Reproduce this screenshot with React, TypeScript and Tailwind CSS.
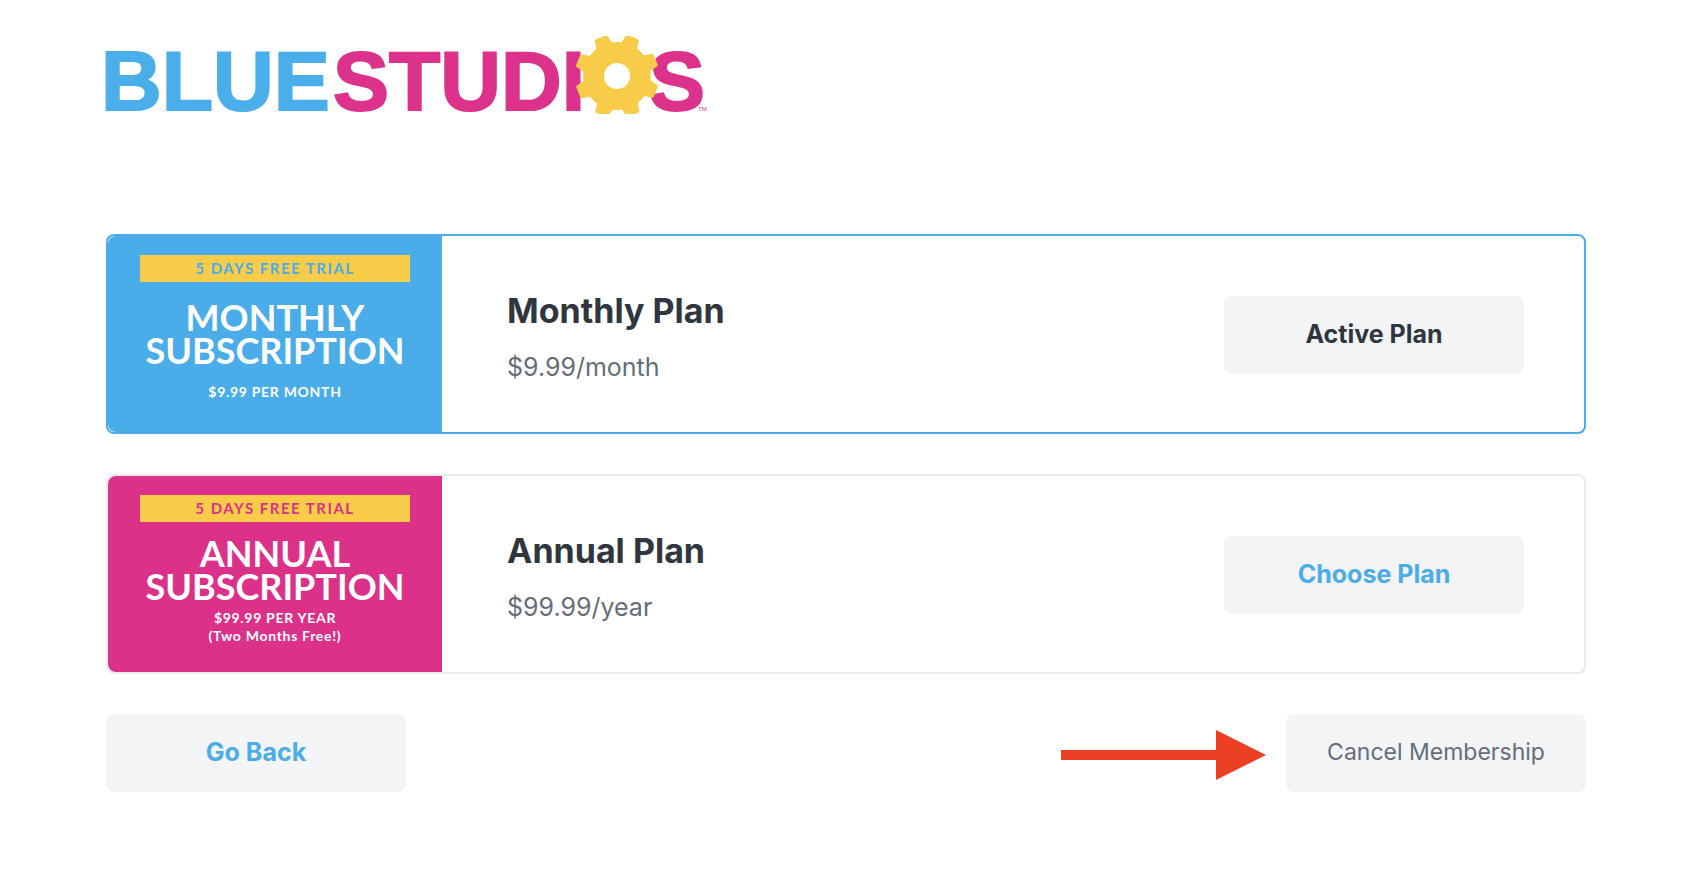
type Plan = {
  id: string;
  name: string;
  price: string;
  active: boolean;
  artTitle: string[];
  artLines: string[];
};

const plans: Plan[] = [
  {
    id: "monthly",
    name: "Monthly Plan",
    price: "$9.99/month",
    active: true,
    artTitle: ["MONTHLY", "SUBSCRIPTION"],
    artLines: ["$9.99 PER MONTH"],
  },
  {
    id: "annual",
    name: "Annual Plan",
    price: "$99.99/year",
    active: false,
    artTitle: ["ANNUAL", "SUBSCRIPTION"],
    artLines: ["$99.99 PER YEAR", "(Two Months Free!)"],
  },
];

const buttonBase =
  "flex h-[78px] w-[300px] shrink-0 items-center justify-center rounded-lg bg-[#f3f4f6]";

function Logo() {
  return (
    <svg
      viewBox="0 0 600 78"
      className="h-[78px] w-[600px] max-w-full overflow-visible"
      role="img"
      aria-label="Blue Studios"
    >
      <g
        fontFamily='"Liberation Sans", Arial, sans-serif'
        fontWeight="700"
        fontSize="84"
        strokeWidth="2"
      >
        <text x="-5" y="74" fill="#4aaeea" stroke="#4aaeea">
          BLUE
        </text>
        <text x="227" y="74" fill="#dd328b" stroke="#dd328b">
          STUDI
        </text>
        <text x="543" y="74" fill="#dd328b" stroke="#dd328b">
          S
        </text>
      </g>
      <text
        x="592"
        y="75"
        fontSize="6"
        fontFamily='"Liberation Sans", Arial, sans-serif'
        fill="#dd328b"
      >
        TM
      </text>
      {/* the gear is cut flat at the top and bottom of the logo */}
      <svg x="465" y="0" width="92" height="78" viewBox="-46 -40 92 78">
        <g fill="#f8cc48">
          {[0, 45, 90, 135, 180, 225, 270, 315].map((angle) => (
            <path
              key={angle}
              d="M-9 -30 L-7 -40 Q-7 -42 -5 -42 L5 -42 Q7 -42 7 -40 L9 -30 Z"
              transform={`rotate(${angle + 22})`}
            />
          ))}
          <circle r="34" />
          <circle r="13" fill="#fff" />
        </g>
      </svg>
    </svg>
  );
}

function PlanArt({ plan }: { plan: Plan }) {
  return (
    <div
      className={`flex w-[334px] shrink-0 flex-col items-center rounded-l-lg pt-[19px] font-[Lato,sans-serif] font-bold text-white ${
        plan.active ? "bg-[#4aace9]" : "bg-[#db3189]"
      }`}
    >
      <p
        className={`w-[270px] bg-[#f8cc48] text-center text-[15px] leading-[27px] tracking-widest ${
          plan.active ? "text-[#4aace9]" : "text-[#db3189]"
        }`}
      >
        5 DAYS FREE TRIAL
      </p>
      <div
        className={`text-center text-[36px] leading-[33px] ${
          plan.active ? "mt-[19px]" : "mt-[15px]"
        }`}
      >
        {plan.artTitle.map((line) => (
          <p key={line}>{line}</p>
        ))}
      </div>
      <div
        className={`text-center text-[14px] leading-[18px] tracking-wider ${
          plan.active ? "mt-4" : "mt-[6px]"
        }`}
      >
        {plan.artLines.map((line) => (
          <p key={line}>{line}</p>
        ))}
      </div>
    </div>
  );
}

function PlanCard({ plan }: { plan: Plan }) {
  return (
    <article
      className={`flex min-h-[200px] rounded-lg border-2 ${
        plan.active ? "border-[#4aace9]" : "border-[#ebebf0]"
      }`}
    >
      <PlanArt plan={plan} />
      <div className="flex grow items-start justify-between pr-[60px] pl-[65px]">
        <div className="pt-[53px]">
          <h2 className="text-[34px] leading-[44px] font-bold text-[#30363d]">
            {plan.name}
          </h2>
          <p className="mt-[18px] text-[25px] leading-[32px] text-[#656d78]">
            {plan.price}
          </p>
        </div>
        <button
          type="button"
          className={`${buttonBase} mt-[60px] text-[25px] font-bold ${
            plan.active ? "text-[#30363d]" : "text-[#4aace9]"
          }`}
        >
          {plan.active ? "Active Plan" : "Choose Plan"}
        </button>
      </div>
    </article>
  );
}

export default function App() {
  return (
    <main className="min-h-screen bg-white pt-9 pr-[100px] pb-[90px] pl-[106px] font-[Inter,sans-serif]">
      <header>
        <Logo />
      </header>

      <section className="mt-[120px] flex flex-col gap-10">
        {plans.map((plan) => (
          <PlanCard key={plan.id} plan={plan} />
        ))}
      </section>

      <footer className="mt-10 flex items-center justify-between">
        <button
          type="button"
          className={`${buttonBase} text-[25px] font-bold text-[#4aace9]`}
        >
          Go Back
        </button>
        <div className="flex items-center gap-5">
          <svg
            viewBox="0 0 205 54"
            className="h-[54px] w-[205px]"
            fill="#ec4024"
            aria-hidden="true"
          >
            <path d="M0 24H155V4L205 29L155 54V34H0Z" />
          </svg>
          <button
            type="button"
            className={`${buttonBase} pb-[2px] text-[23px] text-[#656d78]`}
          >
            Cancel Membership
          </button>
        </div>
      </footer>
    </main>
  );
}
